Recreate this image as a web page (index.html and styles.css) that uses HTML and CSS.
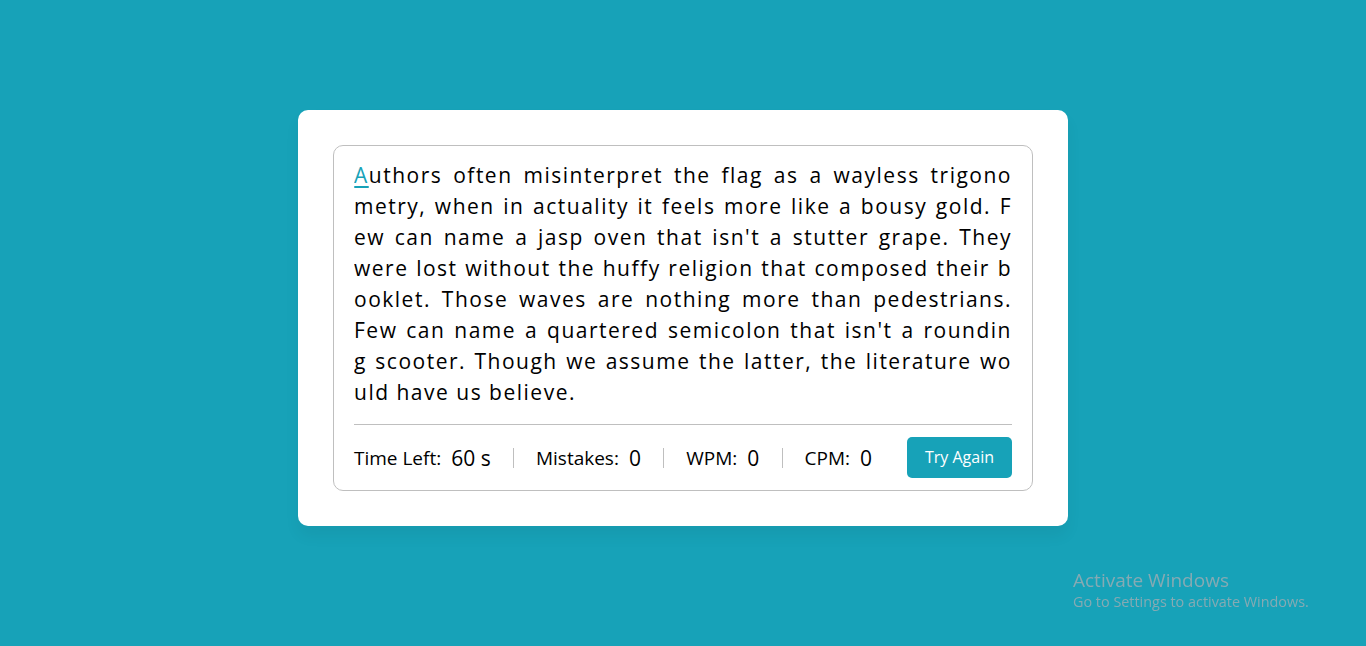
FILE: index.html
```html
<!DOCTYPE html>
<html lang="en">
<head>
<meta charset="utf-8">
<title>Typing Speed Test</title>
<link rel="stylesheet" href="styles.css">
</head>
<body>
<main class="page">
  <div class="wrapper">
    <div class="content-box">
      <div class="typing-text">
        <p>
          <span class="line"><span class="active">A</span>uthors often misinterpret the flag as a wayless trigono</span>
          <span class="line">metry, when in actuality it feels more like a bousy gold. F</span>
          <span class="line">ew can name a jasp oven that isn't a stutter grape. They</span>
          <span class="line">were lost without the huffy religion that composed their b</span>
          <span class="line">ooklet. Those waves are nothing more than pedestrians.</span>
          <span class="line">Few can name a quartered semicolon that isn't a roundin</span>
          <span class="line">g scooter. Though we assume the latter, the literature wo</span>
          <span class="line last">uld have us believe.</span>
        </p>
      </div>
      <div class="content">
        <ul class="result-details">
          <li class="time"><p>Time Left:</p><span><b>60</b> s</span></li>
          <li class="mistake"><p>Mistakes:</p><span>0</span></li>
          <li class="wpm"><p>WPM:</p><span>0</span></li>
          <li class="cpm"><p>CPM:</p><span>0</span></li>
        </ul>
        <button class="retry">Try Again</button>
      </div>
    </div>
  </div>
</main>
<div class="watermark">
  <div class="wm-title">Activate Windows</div>
  <div class="wm-sub">Go to Settings to activate Windows.</div>
</div>
</body>
</html>
```

FILE: styles.css
```css
* {
  margin: 0;
  padding: 0;
  box-sizing: border-box;
}
body {
  font-family: "Open Sans", "Liberation Sans", sans-serif;
  background: #17A2B8;
  color: #000;
  height: 646px;
  overflow: hidden;
}
.page {
  display: flex;
  align-items: center;
  justify-content: center;
  height: 646px;
  padding-bottom: 10px;
}
.wrapper {
  width: 770px;
  padding: 35px;
  background: #fff;
  border-radius: 10px;
  box-shadow: 0 10px 15px rgba(0, 0, 0, 0.05);
}
.content-box {
  padding: 14px 20px 0;
  border-radius: 10px;
  border: 1px solid #bfbfbf;
}
.typing-text {
  overflow: hidden;
}
.typing-text p {
  font-size: 21px;
  line-height: 31px;
  letter-spacing: 1.5px;
}
.line {
  display: block;
  white-space: nowrap;
  text-align: justify;
  text-align-last: justify;
}
.line.last {
  text-align-last: left;
}
.active {
  position: relative;
  color: #17A2B8;
}
.active::before {
  position: absolute;
  content: "";
  height: 2px;
  width: 100%;
  bottom: 1px;
  left: 0;
  border-radius: 5px;
  background: #17A2B8;
}
.content {
  margin-top: 16px;
  display: flex;
  padding: 12px 0;
  align-items: center;
  justify-content: space-between;
  border-top: 1px solid #bfbfbf;
}
.result-details {
  display: flex;
  align-items: center;
  width: calc(100% - 140px);
  justify-content: space-between;
  list-style: none;
}
.result-details li {
  display: flex;
  height: 20px;
  align-items: center;
}
.result-details li:not(:first-child) {
  padding-left: 22px;
  border-left: 1px solid #bfbfbf;
}
.result-details li p {
  font-size: 19px;
}
.result-details li span {
  display: block;
  font-size: 21px;
  margin-left: 10px;
  font-weight: 500;
}
.result-details li b {
  font-weight: 500;
}
.time span {
  font-weight: 400;
}
.retry {
  border: none;
  width: 105px;
  color: #fff;
  padding: 8px 0;
  font-family: inherit;
  font-size: 16px;
  line-height: 25px;
  border-radius: 5px;
  background: #17A2B8;
}
.watermark {
  position: fixed;
  left: 1073px;
  top: 569px;
  color: #86aab3;
  font-family: "Open Sans", sans-serif;
}
.wm-title {
  font-size: 19px;
  line-height: 22px;
}
.wm-sub {
  font-size: 14.4px;
  line-height: 22px;
}
```
